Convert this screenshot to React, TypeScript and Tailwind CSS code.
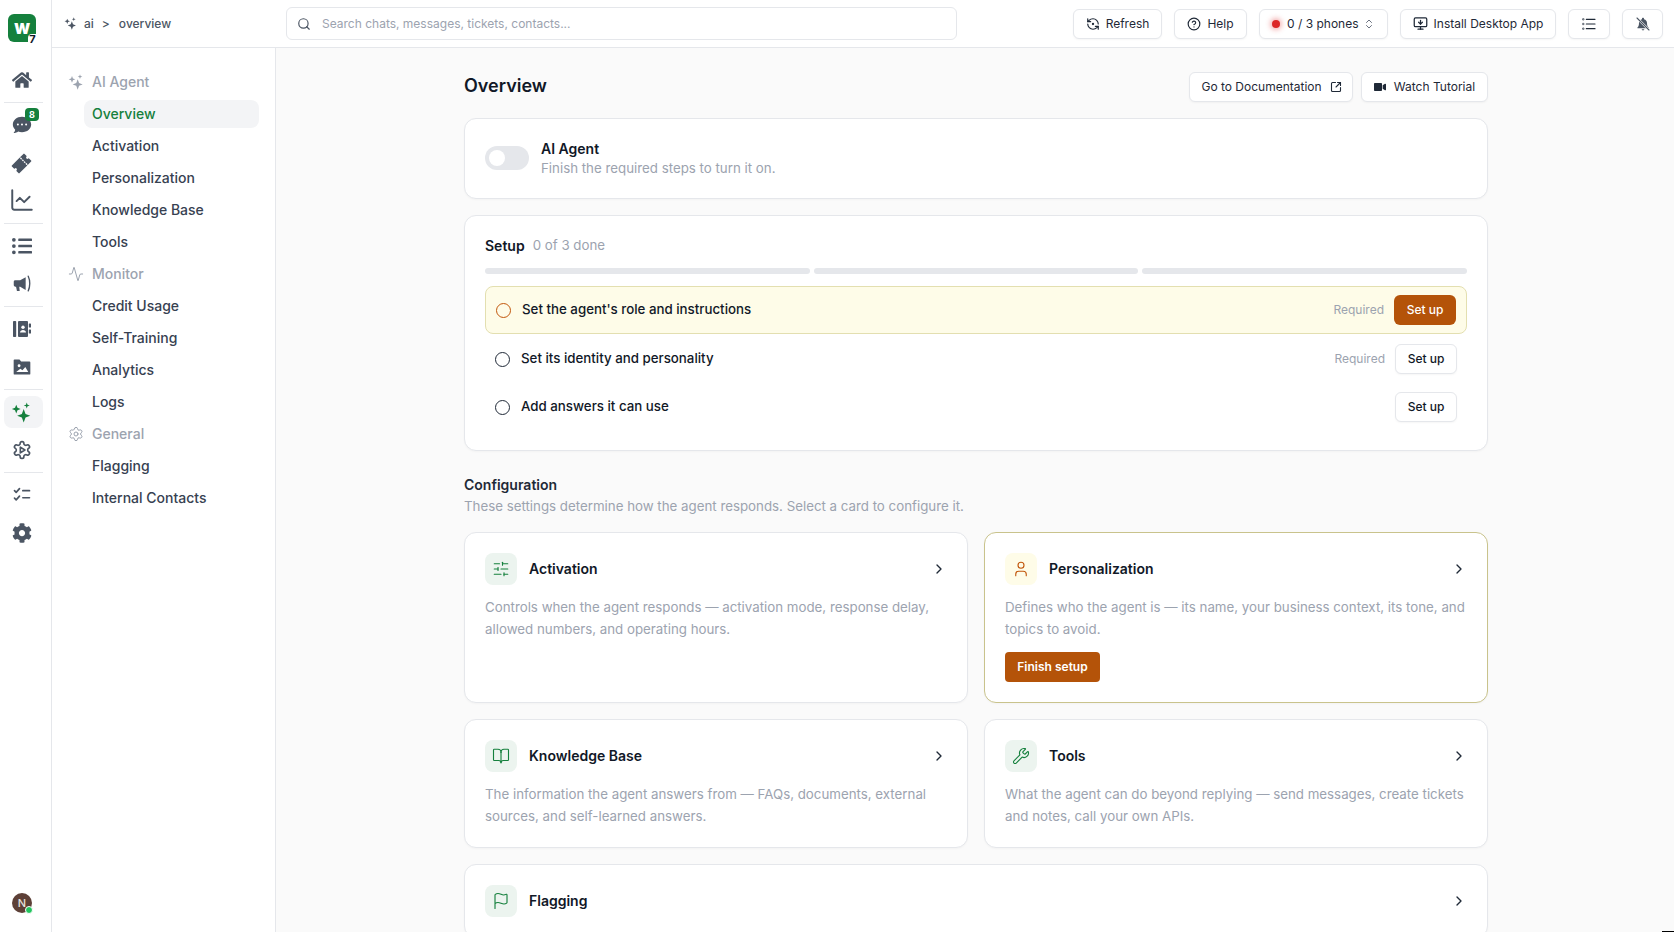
import React from "react";
import {
  Activity, BookOpen, ChartLine, ChevronRight, ChevronsUpDown, CircleHelp, Flag, MonitorDown,
  RefreshCcwDot, Search, Settings, SlidersHorizontal, SquareArrowOutUpRight, User, Wrench,
} from "lucide-react";
import { FaCog, FaHome, FaListUl, FaVideo } from "react-icons/fa";
import { IoTicket } from "react-icons/io5";

function Sparks({ className, stroke }: { className?: string; stroke?: boolean }) {
  return (
    <svg viewBox="0 0 24 24" className={className} fill={stroke ? "none" : "currentColor"} stroke={stroke ? "currentColor" : "none"} strokeWidth={stroke ? 1.6 : 0} strokeLinejoin="round">
      <path d="M14.500 8 L16.600 13.600 L22 15.700 L16.600 17.800 L14.500 23.500 L12.400 17.800 L7 15.700 L12.400 13.600 Z" />
      <path d="M6 3 L7.400 6.600 L11 8 L7.400 9.400 L6 13 L4.600 9.400 L1 8 L4.600 6.600 Z" />
      <path d="M18 0.500 L18.900 3.100 L21.500 4 L18.900 4.900 L18 7.500 L17.100 4.900 L14.500 4 L17.100 3.100 Z" />
    </svg>
  );
}

function ChatIcon() {
  return (
    <svg viewBox="0 0 24 24" className="w-[22px] h-[22px]" fill="currentColor">
      <path d="M12 3C6.300 3 2 6.900 2 11.500c0 2.200 1 4.200 2.600 5.700-.2 1.400-.8 2.600-1.800 3.600 2 0 3.700-.7 5-1.700 1.300.5 2.700.8 4.200.8 5.700 0 10-3.800 10-8.400S17.700 3 12 3z" />
      <circle cx="7.500" cy="11.500" r="1.100" fill="#fff" />
      <circle cx="12" cy="11.500" r="1.100" fill="#fff" />
      <circle cx="16.500" cy="11.500" r="1.100" fill="#fff" />
    </svg>
  );
}

function FolderImage() {
  return (
    <svg viewBox="0 0 24 24" className="w-[20px] h-[20px]" fill="currentColor">
      <path d="M3 3h6l2 2.500h10a1 1 0 0 1 1 1V20a1 1 0 0 1-1 1H3a1 1 0 0 1-1-1V4a1 1 0 0 1 1-1z" />
      <circle cx="8.500" cy="10.500" r="1.700" fill="#fff" />
      <path d="M5 18l5-4 2.500 2 3.500-4 3.500 6z" fill="#fff" />
    </svg>
  );
}

function GearPlay() {
  return (
    <svg viewBox="0 0 24 24" className="w-[20px] h-[20px]" fill="none" stroke="currentColor" strokeWidth="2" strokeLinecap="round" strokeLinejoin="round">
      <path d="M12.220 2h-.44a2 2 0 0 0-2 2v.18a2 2 0 0 1-1 1.730l-.43.25a2 2 0 0 1-2 0l-.15-.08a2 2 0 0 0-2.730.73l-.22.38a2 2 0 0 0 .73 2.730l.15.1a2 2 0 0 1 1 1.720v.51a2 2 0 0 1-1 1.740l-.15.09a2 2 0 0 0-.73 2.730l.22.38a2 2 0 0 0 2.730.73l.15-.08a2 2 0 0 1 2 0l.43.25a2 2 0 0 1 1 1.730V20a2 2 0 0 0 2 2h.44a2 2 0 0 0 2-2v-.18a2 2 0 0 1 1-1.730l.43-.25a2 2 0 0 1 2 0l.15.08a2 2 0 0 0 2.730-.73l.22-.39a2 2 0 0 0-.73-2.730l-.15-.08a2 2 0 0 1-1-1.740v-.5a2 2 0 0 1 1-1.740l.15-.09a2 2 0 0 0 .73-2.730l-.22-.38a2 2 0 0 0-2.730-.73l-.15.08a2 2 0 0 1-2 0l-.43-.25a2 2 0 0 1-1-1.730V4a2 2 0 0 0-2-2z" />
      <path d="M10 8.500v7l5.500-3.500z" />
    </svg>
  );
}

function Checklist() {
  return (
    <svg viewBox="0 0 24 24" className="w-[20px] h-[20px] -mt-0.5" fill="none" stroke="currentColor" strokeWidth="2" strokeLinecap="round" strokeLinejoin="round">
      <path d="M3 8l2 2 4-4.500M3 17l2 2 4-4.500M13 8h8M13 16.500h8" />
    </svg>
  );
}

function DottedList() {
  return (
    <svg viewBox="0 0 24 24" className="w-[16px] h-[16px]" fill="none" stroke="currentColor" strokeWidth="1.800" strokeLinecap="round">
      <path d="M8 5h13M8 12h13M8 19h13" />
      <path d="M3 4h1.500v2H3zM3 11h1.500v2H3zM3 18h1.500v2H3z" strokeWidth="0.900" />
    </svg>
  );
}

function Megaphone() {
  return (
    <svg viewBox="0 0 24 24" className="w-[22px] h-[22px]" fill="currentColor">
      <path d="M3 9.500C3 8.500 4 8 5 8h5l6-3.500v14L10 15H9l.5 4.500h-3L5.500 15C4 15 3 14 3 13z" />
      <path d="M18.800 3.500c2.200 4.500 2.200 11.500 0 16" fill="none" stroke="currentColor" strokeWidth="1.500" strokeLinecap="round" />
    </svg>
  );
}

function ContactsBook() {
  return (
    <svg viewBox="0 0 18 16" className="w-[18px] h-[16px]" fill="currentColor">
      <rect x="0" y="0" width="3.200" height="16" rx="0.800" />
      <rect x="5" y="0" width="10" height="16" rx="1" />
      <rect x="15.800" y="2.500" width="2.200" height="4" rx="0.600" />
      <rect x="15.800" y="8.500" width="2.200" height="4" rx="0.600" />
      <circle cx="10" cy="6.200" r="1.700" fill="#fff" />
      <path d="M7 11.500c0-1.700 1.400-2.600 3-2.600s3 .9 3 2.600z" fill="#fff" />
    </svg>
  );
}

function BellMuted() {
  return (
    <svg viewBox="0 0 24 24" className="w-[16px] h-[16px]" fill="currentColor">
      <path d="M12 2.500c-.9 0-1.500.6-1.500 1.500v.7C7.600 5.400 6 7.800 6 10.500c0 3.500-.8 5.300-2.300 6.800-.4.400-.1 1.200.5 1.200h15.600c.6 0 .9-.8.5-1.200-1.500-1.500-2.300-3.300-2.300-6.800 0-2.700-1.600-5.100-4.500-5.800V4c0-.9-.6-1.500-1.500-1.500z" />
      <path d="M9.800 20a2.300 2.300 0 0 0 4.400 0z" />
      <path d="M3 3l18 18" stroke="#fff" strokeWidth="3.400" />
      <path d="M3 3l18 18" stroke="currentColor" strokeWidth="1.600" strokeLinecap="round" />
    </svg>
  );
}

const Divider = () => <div className="ml-1 w-[39px] h-px bg-[#e5e7eb]" />;

function RailItem({ children, active, top }: { children: React.ReactNode; active?: boolean; top?: string }) {
  return (
    <div className={`ml-1 w-[39px] h-8 pr-1 flex items-center justify-center rounded-lg relative ${active ? "bg-[#f3f4f6] text-[#15803d]" : "text-[#4b5563]"} ${top ?? ""}`}>
      {children}
    </div>
  );
}

function IconRail() {
  return (
    <aside className="w-[52px] shrink-0 border-r border-[#e5e7eb] bg-white flex flex-col relative">
      <div className="ml-2 mt-3.5 w-7 h-7 rounded-md bg-[#15803d] relative flex items-center justify-center text-white text-[15px] leading-none font-black">
        W
        <span className="absolute -right-px -bottom-0.5 w-[9px] h-[10px] bg-white rounded-tl-sm flex items-center justify-center text-[11px] leading-none font-bold text-[#111827]">7</span>
      </div>
      <RailItem top="mt-[22px]"><FaHome size={20} /></RailItem>
      <div className="mt-1.5" /><Divider />
      <RailItem top="mt-1.5">
        <ChatIcon />
        <span className="absolute left-[21px] top-[-1px] w-3.5 h-[13px] rounded bg-[#15803d] text-white text-[9px] leading-none font-bold flex items-center justify-center">8</span>
      </RailItem>
      <RailItem top="mt-1.5"><IoTicket size={21} /></RailItem>
      <RailItem top="mt-1.5"><span className="-mt-0.5"><ChartLine size={26} strokeWidth={1.8} /></span></RailItem>
      <div className="mt-1.5" /><Divider />
      <RailItem top="mt-1.5"><FaListUl size={20} /></RailItem>
      <RailItem top="mt-1.5"><Megaphone /></RailItem>
      <div className="mt-1.5" /><Divider />
      <RailItem top="mt-1.5"><ContactsBook /></RailItem>
      <RailItem top="mt-1.5"><FolderImage /></RailItem>
      <div className="mt-1.5" /><Divider />
      <RailItem top="mt-1.5" active><Sparks className="w-[21px] h-[21px]" /></RailItem>
      <RailItem top="mt-1.5"><GearPlay /></RailItem>
      <div className="mt-1.5" /><Divider />
      <RailItem top="mt-1.5"><Checklist /></RailItem>
      <RailItem top="mt-1.5"><FaCog size={20} /></RailItem>
      <div className="mt-auto mb-[19px] ml-3 w-5 h-5 rounded-full bg-[#5d4037] text-[#e5e0dd] text-[11px] leading-none font-medium flex items-center justify-center relative">
        N
        <span className="absolute right-[-1px] bottom-[-1px] w-2 h-2 rounded-full bg-[#22c55e] border border-white" />
      </div>
    </aside>
  );
}

function Section({ icon, label }: { icon: React.ReactNode; label: string }) {
  return (
    <div className="h-7 pl-4 flex items-center gap-2 text-[#9ca3af] text-sm font-medium">
      <span className="w-4 h-4 flex items-center justify-center">{icon}</span>
      {label}
    </div>
  );
}

function NavItem({ label, active }: { label: string; active?: boolean }) {
  return (
    <div className={`ml-8 h-7 px-2 flex items-center rounded-lg text-sm font-medium ${active ? "bg-[#f3f4f6] text-[#15803d]" : "text-[#374151]"}`}>
      {label}
    </div>
  );
}

function SideNav() {
  return (
    <nav className="w-[224px] shrink-0 border-r border-[#e5e7eb] bg-white pt-5 pr-4 flex flex-col gap-1">
      <Section icon={<Sparks className="w-[16px] h-[16px] shrink-0" />} label="AI Agent" />
      <NavItem label="Overview" active />
      <NavItem label="Activation" />
      <NavItem label="Personalization" />
      <NavItem label="Knowledge Base" />
      <NavItem label="Tools" />
      <Section icon={<Activity size={16} strokeWidth={1.5} />} label="Monitor" />
      <NavItem label="Credit Usage" />
      <NavItem label="Self-Training" />
      <NavItem label="Analytics" />
      <NavItem label="Logs" />
      <Section icon={<Settings size={16} strokeWidth={1.5} />} label="General" />
      <NavItem label="Flagging" />
      <NavItem label="Internal Contacts" />
    </nav>
  );
}

function HeadBtn({ children, className }: { children: React.ReactNode; className?: string }) {
  return (
    <button className={`h-[30px] rounded-md border border-[#e5e7eb] bg-white shadow-[0_1px_2px_rgba(0,0,0,0.04)] flex items-center justify-center text-xs font-normal text-[#1f2937] ${className ?? ""}`}>
      {children}
    </button>
  );
}

function Header() {
  return (
    <header className="h-12 shrink-0 border-b border-[#e5e7eb] bg-white flex items-center">
      <div className="w-[234px] shrink-0 pl-[12px] flex items-center text-xs font-medium text-[#4b5563]">
        <Sparks className="w-[13px] h-[13px] text-[#4b5563]" />
        <span className="ml-[7px]">ai</span>
        <span className="ml-2">&gt;</span>
        <span className="ml-[9px]">overview</span>
      </div>
      <div className="w-[671px] h-[33px] shrink-0 rounded-md border border-[#e5e7eb] bg-white flex items-center pl-[10px] gap-[11px]">
        <Search size={14} className="text-[#4b5563]" />
        <span className="text-xs text-[#9ca3af]">Search chats, messages, tickets, contacts...</span>
      </div>
      <div className="ml-auto mr-[11px] flex items-center gap-3">
        <HeadBtn className="w-[89px] gap-1.5"><RefreshCcwDot size={14} />Refresh</HeadBtn>
        <HeadBtn className="w-[73px] gap-1.5"><CircleHelp size={14} />Help</HeadBtn>
        <HeadBtn className="w-[129px] !justify-start pl-3 gap-[7px]">
          <span className="w-2 h-2 rounded-full bg-[#dc2626] shadow-[0_0_5px_2px_rgba(220,38,38,0.35)]" />
          0 / 3 phones
          <ChevronsUpDown size={12} className="-ml-[3px] text-[#6b7280]" />
        </HeadBtn>
        <HeadBtn className="w-[156px] gap-1.5"><MonitorDown size={15} />Install Desktop App</HeadBtn>
        <HeadBtn className="w-[42px]"><DottedList /></HeadBtn>
        <HeadBtn className="w-[41px] text-[#4b5563]"><BellMuted /></HeadBtn>
      </div>
    </header>
  );
}

function SetupRow({ label, required, active }: { label: string; required?: boolean; active?: boolean }) {
  return (
    <div className={`px-2.5 py-2 flex items-center rounded-lg ${active ? "bg-[#fefce8] border border-[#e3dfb0]" : ""}`}>
      <span className={`w-[15px] h-[15px] rounded-full border-[1.5px] ${active ? "border-[#c2570c]" : "border-[#1f2937]"}`} />
      <span className="ml-[11px] text-[13.3px] font-medium text-[#111827]">{label}</span>
      {required && <span className="ml-auto text-xs text-[#9ca3af]">Required</span>}
      <button className={`${required ? "ml-[10px]" : "ml-auto"} w-[62px] h-[30px] rounded-md text-xs font-medium ${active ? "bg-[#b45309] text-white" : "bg-white border border-[#e5e7eb] text-[#111827] shadow-[0_1px_2px_rgba(0,0,0,0.04)]"}`}>
        Set up
      </button>
    </div>
  );
}

function ConfigCard({ icon, title, desc, warn, action, wide }: { icon: React.ReactNode; title: string; desc?: string; warn?: boolean; action?: boolean; wide?: boolean }) {
  return (
    <div className={`rounded-xl border bg-white p-5 shadow-[0_1px_2px_rgba(0,0,0,0.03)] ${warn ? "border-[#c9c38c]" : "border-[#e5e7eb]"} ${wide ? "col-span-2" : ""}`}>
      <div className="flex items-center gap-3 h-8">
        <span className={`w-8 h-8 rounded-lg flex items-center justify-center ${warn ? "bg-[#fefce8] text-[#c2570c]" : "bg-[#ecf4ef] text-[#15803d]"}`}>{icon}</span>
        <span className="text-sm font-semibold text-[#111827]">{title}</span>
        <ChevronRight size={16} className="ml-auto text-[#1f2937]" />
      </div>
      {desc && <p className="mt-[11px] text-[13.3px] leading-[22px] text-[#9ca3af]">{desc}</p>}
      {action && <button className="mt-3 w-[95px] h-[30px] rounded bg-[#b45309] text-white text-xs font-semibold block">Finish setup</button>}
    </div>
  );
}

function Main() {
  return (
    <main className="flex-1 min-w-0 bg-[#fafafa] overflow-hidden pl-0.5">
      <div className="w-[1024px] mx-auto pt-6">
        <div className="flex items-center h-[30px] mb-4">
          <h1 className="text-lg font-semibold text-[#111827] pb-0.5">Overview</h1>
          <HeadBtn className="ml-auto w-[164px] gap-2 pl-px">Go to Documentation<SquareArrowOutUpRight size={12} strokeWidth={2.2} /></HeadBtn>
          <HeadBtn className="ml-2 w-[127px] gap-2"><FaVideo size={12} />Watch Tutorial</HeadBtn>
        </div>
        <section className="h-[81px] rounded-xl border border-[#e5e7eb] bg-white shadow-[0_1px_2px_rgba(0,0,0,0.03)] px-5 flex items-center gap-3">
          <span className="w-11 h-6 mb-0.5 rounded-full bg-[#e5e7eb] flex items-center px-1">
            <span className="w-4 h-4 rounded-full bg-white" />
          </span>
          <div>
            <div className="text-sm leading-[19px] font-semibold text-[#111827]">AI Agent</div>
            <div className="mt-px text-[13.3px] leading-[19px] text-[#9ca3af]">Finish the required steps to turn it on.</div>
          </div>
        </section>
        <section className="mt-4 rounded-xl border border-[#e5e7eb] bg-white shadow-[0_1px_2px_rgba(0,0,0,0.03)] p-5">
          <div className="h-5 flex items-center gap-2">
            <span className="text-sm font-semibold text-[#111827]">Setup</span>
            <span className="text-[13.3px] text-[#9ca3af]">0 of 3 done</span>
          </div>
          <div className="mt-3 flex gap-1">
            <div className="flex-1 h-1.5 rounded-full bg-[#e5e7eb]" />
            <div className="flex-1 h-1.5 rounded-full bg-[#e5e7eb]" />
            <div className="flex-1 h-1.5 rounded-full bg-[#e5e7eb]" />
          </div>
          <div className="mt-3 flex flex-col gap-0.5">
            <SetupRow label="Set the agent's role and instructions" required active />
            <SetupRow label="Set its identity and personality" required />
            <SetupRow label="Add answers it can use" />
          </div>
        </section>
        <h2 className="mt-6 text-sm leading-5 font-semibold text-[#1f2937]">Configuration</h2>
        <p className="mt-px text-[13.3px] leading-5 text-[#9ca3af]">These settings determine how the agent responds. Select a card to configure it.</p>
        <div className="mt-4 grid grid-cols-2 gap-4">
          <ConfigCard icon={<SlidersHorizontal size={18} strokeWidth={1.5} />} title="Activation" desc="Controls when the agent responds — activation mode, response delay, allowed numbers, and operating hours." />
          <ConfigCard warn icon={<User size={18} strokeWidth={1.5} />} title="Personalization" desc="Defines who the agent is — its name, your business context, its tone, and topics to avoid." action />
          <ConfigCard icon={<BookOpen size={18} strokeWidth={1.5} />} title="Knowledge Base" desc="The information the agent answers from — FAQs, documents, external sources, and self-learned answers." />
          <ConfigCard icon={<Wrench size={18} strokeWidth={1.5} />} title="Tools" desc="What the agent can do beyond replying — send messages, create tickets and notes, call your own APIs." />
          <ConfigCard wide icon={<Flag size={18} strokeWidth={1.5} />} title="Flagging" />
        </div>
      </div>
    </main>
  );
}

export default function App() {
  return (
    <div className="h-screen w-full overflow-hidden flex bg-white relative" style={{ fontFamily: "Inter, 'Noto Sans', sans-serif" }}>
      <IconRail />
      <div className="flex-1 min-w-0 flex flex-col">
        <Header />
        <div className="flex-1 min-h-0 flex">
          <SideNav />
          <Main />
        </div>
      </div>
      <div className="absolute right-0 bottom-0 w-3 h-px bg-black" />
    </div>
  );
}
